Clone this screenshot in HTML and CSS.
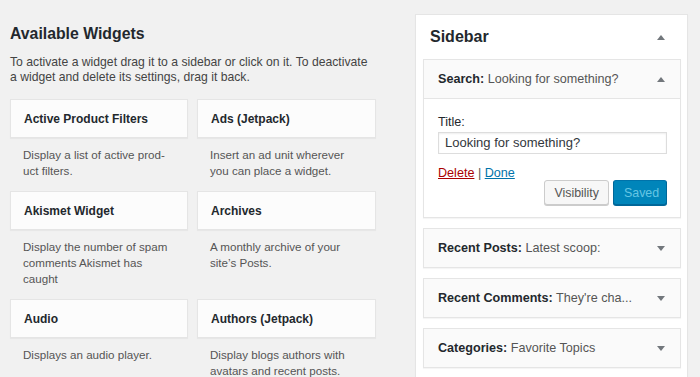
FILE: index.html
```html
<!DOCTYPE html>
<html>
<head>
<meta charset="utf-8">
<link rel="stylesheet" href="styles.css">
</head>
<body>
<div class="page">
  <section class="available">
    <h2 class="avail-title">Available Widgets</h2>
    <p class="avail-desc">To activate a widget drag it to a sidebar or click on it. To deactivate a widget and delete its settings, drag it back.</p>
    <div class="widget-grid">
      <div class="widget">
        <div class="widget-card">Active Product Filters</div>
        <div class="widget-desc">Display a list of active prod-<br>uct filters.</div>
      </div>
      <div class="widget">
        <div class="widget-card">Ads (Jetpack)</div>
        <div class="widget-desc">Insert an ad unit wherever you can place a widget.</div>
      </div>
      <div class="widget">
        <div class="widget-card">Akismet Widget</div>
        <div class="widget-desc">Display the number of spam comments Akismet has caught</div>
      </div>
      <div class="widget">
        <div class="widget-card">Archives</div>
        <div class="widget-desc">A monthly archive of your site’s Posts.</div>
      </div>
      <div class="widget">
        <div class="widget-card">Audio</div>
        <div class="widget-desc">Displays an audio player.</div>
      </div>
      <div class="widget">
        <div class="widget-card">Authors (Jetpack)</div>
        <div class="widget-desc">Display blogs authors with avatars and recent posts.</div>
      </div>
    </div>
  </section>

  <section class="sidebar">
    <div class="sidebar-head">
      <h2 class="sidebar-title">Sidebar</h2>
      <span class="arrow up"></span>
    </div>
    <div class="sb-widget open">
      <div class="sb-widget-head">
        <span class="sb-name">Search:<span class="sb-sub"> Looking for something?</span></span>
        <span class="arrow up"></span>
      </div>
      <div class="sb-widget-body">
        <label class="field-label">Title:</label>
        <div class="field-input">Looking for something?</div>
        <div class="actions">
          <div class="links"><a class="delete">Delete</a> | <a class="done">Done</a></div>
          <div class="buttons">
            <span class="btn">Visibility</span>
            <span class="btn primary">Saved</span>
          </div>
        </div>
      </div>
    </div>
    <div class="sb-widget">
      <div class="sb-widget-head">
        <span class="sb-name">Recent Posts:<span class="sb-sub"> Latest scoop:</span></span>
        <span class="arrow down"></span>
      </div>
    </div>
    <div class="sb-widget">
      <div class="sb-widget-head">
        <span class="sb-name">Recent Comments:<span class="sb-sub"> They're cha...</span></span>
        <span class="arrow down"></span>
      </div>
    </div>
    <div class="sb-widget">
      <div class="sb-widget-head">
        <span class="sb-name">Categories:<span class="sb-sub"> Favorite Topics</span></span>
        <span class="arrow down"></span>
      </div>
    </div>
  </section>
</div>
</body>
</html>
```

FILE: styles.css
```css
* { box-sizing: border-box; }
html, body { margin: 0; padding: 0; }
body {
  background: #f1f1f1;
  font-family: "Liberation Sans", Arial, sans-serif;
  color: #23282d;
  width: 700px;
  height: 377px;
  overflow: hidden;
}
.page {
  display: flex;
  align-items: flex-start;
  padding: 0 12px 0 10px;
  height: 377px;
  overflow: hidden;
}
.available {
  width: 366px;
  flex: none;
}
.avail-title {
  margin: 24px 0 0;
  font-size: 15.8px;
  line-height: 20px;
  font-weight: bold;
}
.avail-desc {
  margin: 11px 0 0;
  font-size: 12.2px;
  line-height: 14.5px;
  color: #444;
}
.widget-grid {
  margin-top: 15px;
  display: grid;
  grid-template-columns: 178px 179px;
  column-gap: 9px;
}
.widget-card {
  background: #fcfcfc;
  border: 1px solid #e5e5e5;
  box-shadow: 0 1px 1px rgba(0,0,0,.04);
  height: 39px;
  padding: 0 13px;
  display: flex;
  align-items: center;
  font-weight: bold;
  font-size: 12px;
  color: #23282d;
}
.widget-desc {
  padding: 9px 13px 12px;
  font-size: 11.6px;
  line-height: 16px;
  color: #555;
}
.sidebar {
  margin-left: 39px;
  margin-top: 14px;
  width: 273px;
  flex: none;
  height: 400px;
  background: #fff;
  border: 1px solid #e5e5e5;
  box-shadow: 0 1px 1px rgba(0,0,0,.04);
  padding: 0 6px 0 7px;
}
.sidebar-head {
  height: 44px;
  display: flex;
  align-items: center;
  justify-content: space-between;
  padding: 0 16px 0 7px;
}
.sidebar-title {
  margin: 0;
  font-size: 16px;
  font-weight: bold;
}
.arrow {
  width: 0; height: 0;
  border-left: 4px solid transparent;
  border-right: 4px solid transparent;
}
.arrow.up { border-bottom: 5px solid #72777c; }
.arrow.down { border-top: 5px solid #72777c; }
.sb-widget {
  border: 1px solid #e5e5e5;
  box-shadow: 0 1px 1px rgba(0,0,0,.04);
  background: #fafafa;
  margin-bottom: 10px;
}
.sb-widget-head {
  height: 38px;
  display: flex;
  align-items: center;
  justify-content: space-between;
  padding: 0 15px 0 14px;
}
.sb-widget.open .sb-widget-head { border-bottom: 1px solid #e5e5e5; height: 39px; }
.sb-name {
  font-weight: bold;
  font-size: 12.6px;
  color: #23282d;
}
.sb-sub { font-weight: normal; color: #555; }
.sb-widget-body {
  background: #fff;
  padding: 15px 13px 12px 14px;
}
.field-label {
  display: block;
  font-size: 12.6px;
  line-height: 16px;
  color: #23282d;
}
.field-input {
  margin-top: 2px;
  height: 22px;
  border: 1px solid #ddd;
  box-shadow: inset 0 1px 2px rgba(0,0,0,.07);
  padding: 0 6px;
  font-size: 13px;
  line-height: 20px;
  color: #32373c;
  background: #fff;
}
.actions {
  margin-top: 11px;
}
.links {
  font-size: 12.6px;
  line-height: 16px;
  color: #555;
}
.delete { color: #a00; text-decoration: underline; }
.done { color: #0073aa; text-decoration: underline; }
.buttons {
  display: flex;
  justify-content: flex-end;
  gap: 4px;
  margin-top: -1px;
}
.btn {
  height: 25px;
  padding: 0 9px;
  display: flex;
  align-items: center;
  font-size: 12.4px;
  border: 1px solid #ccc;
  border-radius: 3px;
  background: #f7f7f7;
  box-shadow: 0 1px 0 #ccc;
  color: #555;
}
.btn.primary {
  background: #0085ba;
  border-color: #0073aa #006799 #006799;
  box-shadow: 0 1px 0 #006799;
  color: #66c6e4;
  padding: 0 10px;
  width: 54px;
}
```
